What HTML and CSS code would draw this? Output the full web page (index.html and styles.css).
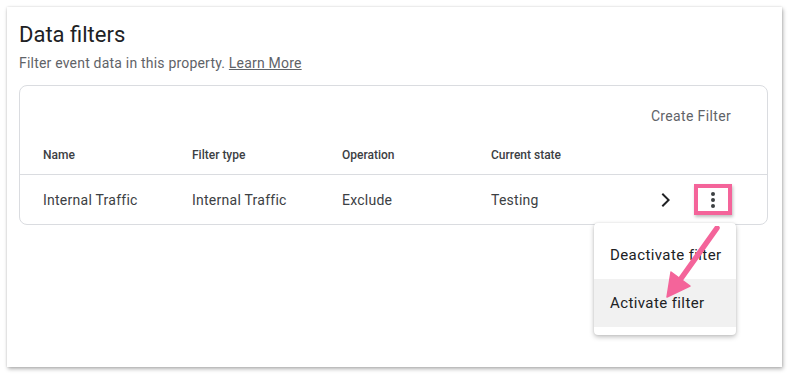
FILE: index.html
```html
<!DOCTYPE html>
<html lang="en">
<head>
<meta charset="UTF-8" />
<title>Data filters</title>
<link rel="stylesheet" href="styles.css">
</head>
<body>

<section class="panel">
  <h2 class="title">Data filters</h2>
  <p class="subtitle">Filter event data in this property. <a href="#">Learn More</a></p>

  <div class="card">
    <div class="card-top">
      <button class="create-btn">Create Filter</button>
    </div>
    <div class="row head">
      <span>Name</span>
      <span>Filter type</span>
      <span>Operation</span>
      <span>Current state</span>
    </div>
    <div class="row body">
      <span>Internal Traffic</span>
      <span>Internal Traffic</span>
      <span>Exclude</span>
      <span>Testing</span>
      <div class="actions">
        <svg class="chevron" width="24" height="24" viewBox="0 0 24 24"><path d="M8.6 6.4 10 5l7 7-7 7-1.4-1.4 5.6-5.6z" fill="#202124"/></svg>
        <div class="kebab-wrap">
          <button class="kebab">
            <svg width="24" height="24" viewBox="0 0 24 24"><circle cx="12" cy="6" r="2" fill="#3c4043"/><circle cx="12" cy="12" r="2" fill="#3c4043"/><circle cx="12" cy="18" r="2" fill="#3c4043"/></svg>
          </button>
          <ul class="menu">
            <li>Deactivate filter</li>
            <li class="hover">Activate filter</li>
          </ul>
          <svg class="pointer" width="70" height="90" viewBox="0 0 70 90">
            <line x1="57" y1="2" x2="20" y2="54" stroke="#f4649a" stroke-width="5.5" stroke-linecap="round"/>
            <polygon points="7,71 30,60 11,46" fill="#f4649a" stroke="#f4649a" stroke-width="1.5" stroke-linejoin="round"/>
          </svg>
        </div>
      </div>
    </div>
  </div>
</section>

</body>
</html>
```

FILE: styles.css
```css
body {
  margin: 0;
  padding: 7px 10px 11px 7px;
  background: #fff;
  font-family: Roboto, "Noto Sans", Arial, sans-serif;
  color: #3c4043;
}
.panel {
  height: 360px;
  box-sizing: border-box;
  padding: 16px 14px 0 12px;
  background: #fff;
  box-shadow: 1px 2px 4px rgba(0,0,0,0.3), 0 0 2px rgba(0,0,0,0.12);
}
.title {
  margin: 0;
  font-size: 22px;
  font-weight: 400;
  line-height: 24px;
  color: #202124;
}
.subtitle {
  margin: 6px 0 0;
  font-size: 14px;
  line-height: 20px;
  letter-spacing: 0.2px;
  color: #5f6368;
}
.subtitle a {
  color: #5f6368;
  text-decoration: underline;
}
.card {
  margin-top: 12px;
  border: 1px solid #dadce0;
  border-radius: 8px;
}
.card-top {
  display: flex;
  justify-content: flex-end;
  padding: 14px 20px 0;
  height: 36px;
}
.create-btn {
  border: none;
  background: none;
  font-family: inherit;
  font-size: 14px;
  color: #5f6368;
  letter-spacing: 0.35px;
  padding: 6px 16px;
  height: 32px;
}
.row {
  display: grid;
  grid-template-columns: 149px 150px 149px 150px 1fr;
  align-items: center;
  padding-left: 23px;
}
.head {
  height: 38px;
  font-size: 12px;
  font-weight: 500;
  color: #3c4043;
  border-bottom: 1px solid #dadce0;
}
.body {
  height: 49px;
  font-size: 14px;
  letter-spacing: 0.25px;
  color: #3c4043;
}
.actions {
  display: flex;
  align-items: center;
  justify-content: flex-end;
  gap: 17px;
  padding-right: 35px;
}
.chevron {
  margin-top: 1px;
}
.kebab-wrap {
  position: relative;
}
.kebab {
  display: flex;
  align-items: center;
  justify-content: center;
  width: 38px;
  height: 31px;
  box-sizing: border-box;
  padding: 0;
  border: 4px solid #f4649a;
  background: #fff;
  box-shadow: 1px 2px 3px rgba(0,0,0,0.25);
}
.menu {
  position: absolute;
  top: 39px;
  right: -4px;
  width: 142px;
  margin: 0;
  padding: 8px 0;
  list-style: none;
  background: #fff;
  border-radius: 4px;
  box-shadow: 0 2px 5px rgba(0,0,0,0.25), 0 0 2px rgba(0,0,0,0.1);
  z-index: 5;
}
.menu li {
  height: 48px;
  line-height: 48px;
  padding-left: 16px;
  font-size: 15px;
  letter-spacing: 0.4px;
  color: #202124;
}
.menu li.hover {
  background: #f1f1f1;
}
.pointer {
  position: absolute;
  top: 42px;
  left: -34px;
  z-index: 6;
}
```
